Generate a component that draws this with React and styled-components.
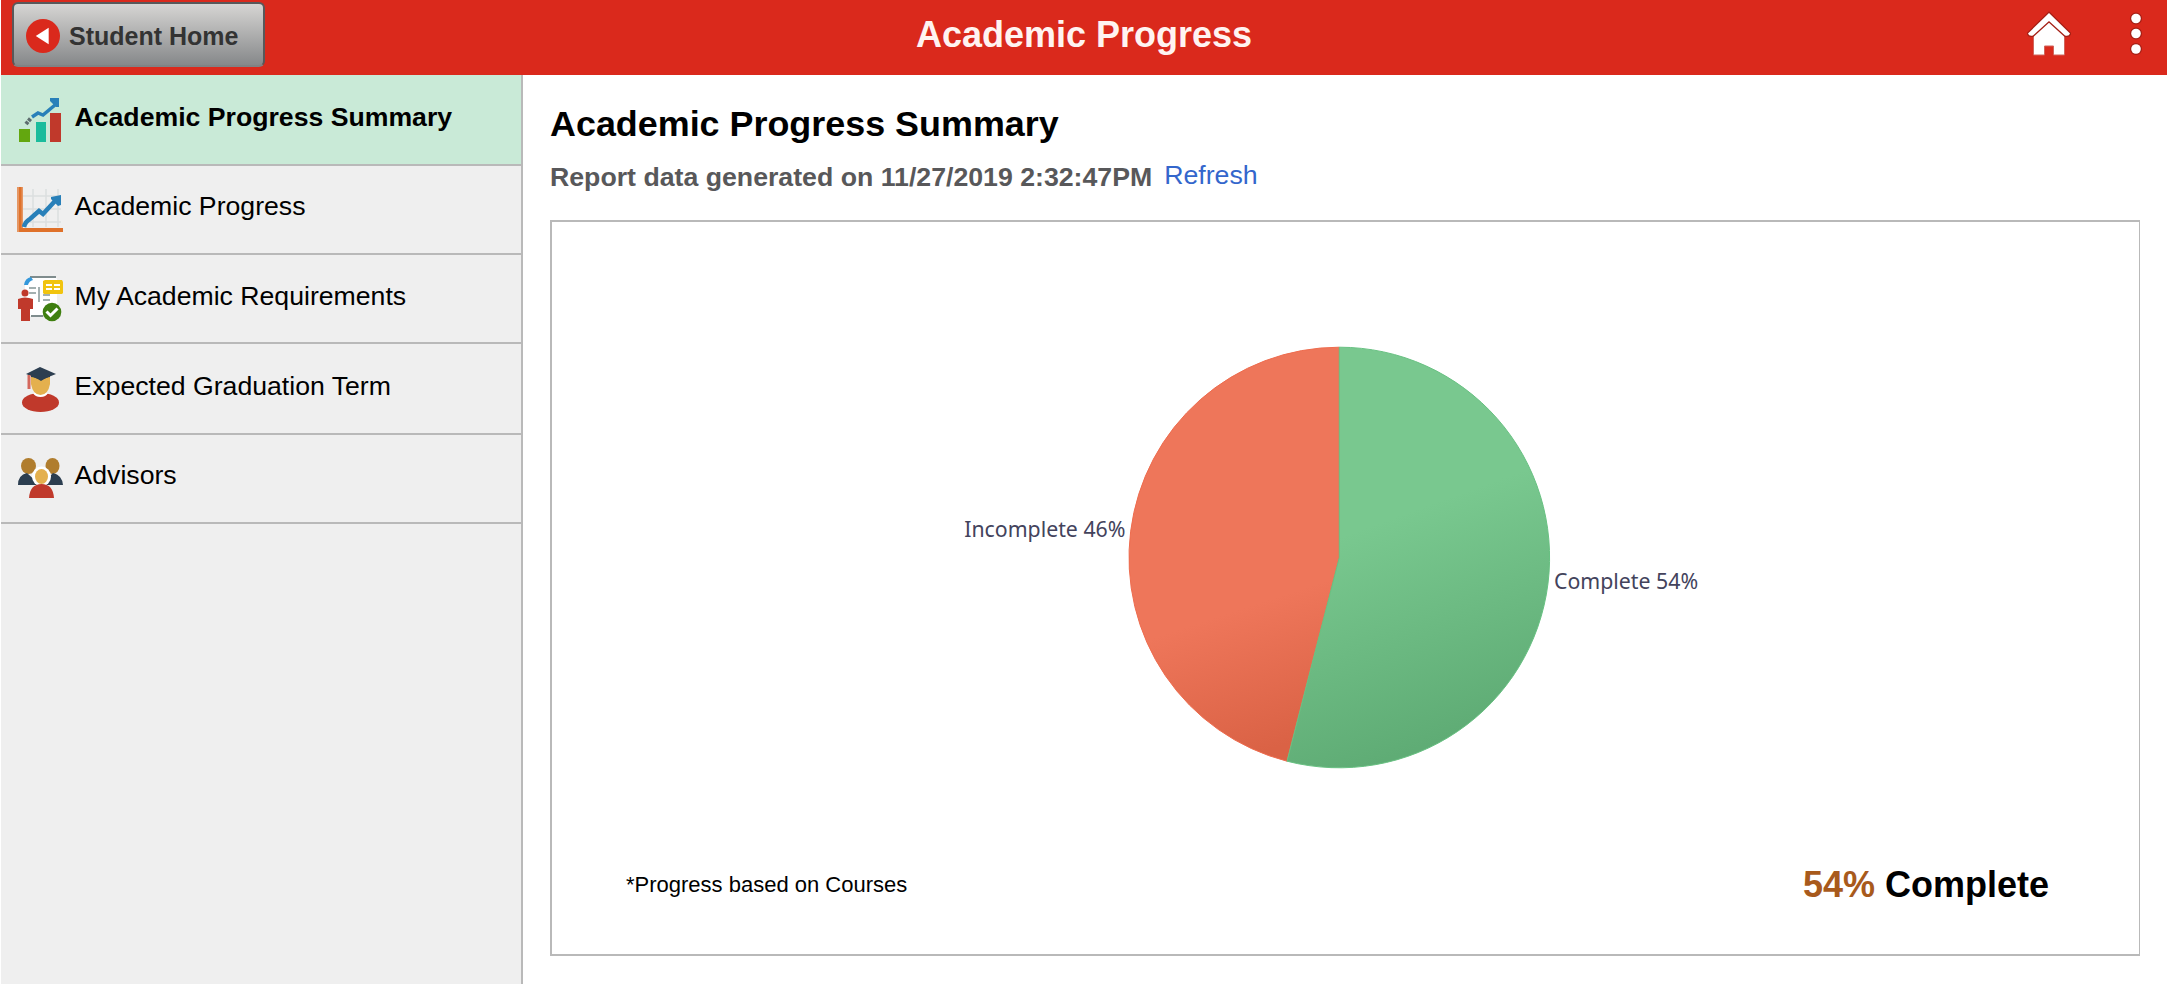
import React from 'react';
import styled, { createGlobalStyle } from 'styled-components';

const GlobalStyle = createGlobalStyle`
  * {
    box-sizing: border-box;
  }
  body {
    margin: 0;
    background: #fff;
    font-family: 'Liberation Sans', Arial, sans-serif;
  }
`;

const Page = styled.div`
  display: flex;
  flex-direction: column;
  width: 2168px;
  height: 984px;
  padding: 0 1px;
  overflow: hidden;
`;

const Header = styled.header`
  display: grid;
  grid-template-columns: 1fr auto 1fr;
  align-items: start;
  height: 75px;
  flex: none;
  background: #da291c;
`;

const BackButton = styled.button`
  display: flex;
  align-items: center;
  gap: 9px;
  width: 253px;
  height: 65px;
  margin: 2px 0 0 11px;
  padding: 3px 0 0 12px;
  border: 2px solid #58585a;
  border-bottom-color: #808284;
  border-radius: 6px;
  background: linear-gradient(#d6d5d3, #86888a);
  color: #333;
  font: bold 25px/30px 'Liberation Sans', Arial, sans-serif;
  white-space: nowrap;
`;

const HeaderTitle = styled.h1`
  margin: 13px 0 0;
  color: #fff3f1;
  font-size: 36px;
  line-height: 44px;
`;

const HeaderActions = styled.div`
  display: flex;
  justify-content: flex-end;
  gap: 58px;
  padding: 11px 24px 0 0;
`;

const Body = styled.div`
  display: flex;
  flex: 1;
  min-height: 0;
`;

const Sidebar = styled.nav`
  width: 522px;
  flex: none;
  border-right: 2px solid #b9b9b9;
  background: #efefef;
`;

const NavItem = styled.a`
  display: flex;
  gap: 11.5px;
  height: ${props => props.$height || 89}px;
  padding: ${props => props.$top || 22}px 0 0 16px;
  border-bottom: 2px solid #b9b9b9;
  background: ${props => (props.$active ? '#c9ead7' : 'transparent')};
  color: #000;
  font-size: 26.65px;
  font-weight: ${props => (props.$active ? 'bold' : 'normal')};
  line-height: 44px;
  white-space: nowrap;

  svg {
    flex: none;
  }
`;

const NavLabel = styled.span`
  margin-top: ${props => props.$shift || -4}px;
`;

const Content = styled.main`
  flex: 1;
  padding: 27px 27px 0;
`;

const PageTitle = styled.h2`
  margin: 0;
  font-size: 35.9px;
  line-height: 44px;
`;

const ReportLine = styled.div`
  display: flex;
  gap: 12px;
  height: 74px;
  padding-top: 11px;
  color: #58585a;
  font-size: 26.7px;
  font-weight: bold;
  line-height: 40px;
`;

const RefreshLink = styled.a`
  margin-top: -2px;
  color: #3366cc;
  font-weight: normal;
`;

const Panel = styled.section`
  display: flex;
  flex-direction: column;
  width: 1590px;
  height: 736px;
  border: 2px solid #b9b9b9;
  border-right-width: 1px;
`;

const PieChart = styled.svg`
  display: block;
  width: 1587px;
  height: 620px;

  text {
    fill: #43435c;
    font: 21.3px 'Noto Sans', sans-serif;
  }
`;

const PanelFooter = styled.div`
  display: flex;
  justify-content: space-between;
  align-items: flex-start;
  padding: 21px 90px 0 74px;
`;

const Note = styled.span`
  margin-top: 6px;
  font-size: 22px;
  line-height: 32px;
`;

const Total = styled.strong`
  font-size: 36px;
  line-height: 44px;
`;

const Percent = styled.span`
  color: #a85a1c;
`;

const BackIcon = () => (
  <svg width="34" height="34" viewBox="0 0 33 33">
    <circle cx="16.5" cy="16.5" r="16.5" fill="#da291c" />
    <path d="M9.500 16.500 22 8.500v16z" fill="#fff" />
  </svg>
);

const HomeIcon = () => (
  <svg width="44" height="46" viewBox="0 0 44 46">
    <path
      d="M6.500 22 22 8l15.500 14v22H26.500v-9h-9v9H6.500z"
      fill="#fff"
      stroke="#d0655c"
      strokeWidth="1"
    />
    <path
      d="M22 2 43 22.500q-1 3-5 2L22 10 6 24.500q-4 1-5-2z"
      fill="#fff"
      stroke="#a51f15"
      strokeWidth="2.500"
      paintOrder="stroke"
    />
  </svg>
);

const MenuIcon = () => (
  <svg width="14" height="46" viewBox="0 0 14 46">
    <g fill="#fff" stroke="#a51f15" strokeWidth="2.500" paintOrder="stroke">
      <circle cx="7" cy="7.500" r="4.800" />
      <circle cx="7" cy="22.500" r="4.800" />
      <circle cx="7" cy="38" r="4.800" />
    </g>
  </svg>
);

const SummaryIcon = () => (
  <svg width="46" height="46" viewBox="0 0 46 46">
    <path d="M2 32h11v13H2z" fill="#63a70f" />
    <path d="M19 25h10v20H19z" fill="#1abc9c" />
    <path d="M33 16h11v29H33z" fill="#c0392b" />
    <path d="m15 20 6-4 5 2 12-10" fill="none" stroke="#2980b9" strokeWidth="3.500" />
    <path d="M33 1h9v9h-3l-6-6z" fill="#2980b9" />
    <path d="m9 27 5-6" stroke="#5d6d6e" strokeWidth="4" strokeDasharray="3 1" />
  </svg>
);

const ProgressIcon = () => (
  <svg width="46" height="46" viewBox="0 0 46 46">
    <path
      d="M16 2v38M29 2v38M41 2v38M6 9h38M6 22h38M6 35h38"
      stroke="#dcdfe0"
      strokeWidth="1.500"
    />
    <path d="M0 0h6v45H0z" fill="#e59663" />
    <path d="M2 0h2.500v41H46v4H2z" fill="#df712a" />
    <path d="M7 40q1-5 6-8l9-8 4 3 12-13" fill="none" stroke="#2980b9" strokeWidth="4.500" />
    <path d="M34 10l10-2v10l-3 1-7-7z" fill="#2980b9" />
  </svg>
);

const RequirementsIcon = () => (
  <svg width="46" height="46" viewBox="0 0 46 46">
    <path d="M14 1h24l2 2v37H8V8z" fill="#fff" />
    <path d="M13 1h26M14 40h12" stroke="#7f8c8d" strokeWidth="2" />
    <path d="M7 9q1-7 7-8l2 3q-4 1-5 5z" fill="#3498db" />
    <path d="M22 11v15M12 12h7M12 17h7M26 19h7M26 24h7" stroke="#a3b0b0" strokeWidth="2" />
    <path d="M28 4h17l1 2v11l-1 1H27l-1-1V5z" fill="#f1c40f" />
    <path d="M29 9h6M37 9h6M29 13h6M37 13h6" stroke="#fff" strokeWidth="2" />
    <circle cx="8" cy="17" r="3.500" fill="#c0392b" />
    <path d="M1 23q7-3 15 0v10h-3v12H4V33H1z" fill="#c0392b" />
    <circle cx="35" cy="36" r="9.300" fill="#3f7f10" />
    <path d="m29.500 35.500 4 4 7-7" fill="none" stroke="#fff" strokeWidth="3" />
  </svg>
);

const GraduateIcon = () => (
  <svg width="46" height="46" viewBox="0 0 46 46">
    <ellipse cx="23.500" cy="35.500" rx="18.500" ry="9.500" fill="#c0392b" />
    <path d="M16 26h15q-2 4-7.500 4T16 26z" fill="#fff" />
    <path d="M14 9h19v8q-2 11-9.500 11T14 17z" fill="#e4b04e" />
    <path d="M14 8h19v2q-3 0-9 4-6-4-10-4z" fill="#2c3e50" />
    <path d="M9 7 23 0l16 7-15 6z" fill="#2c3e50" />
    <path d="M12 8v14" stroke="#d4685d" strokeWidth="3" />
  </svg>
);

const AdvisorsIcon = () => (
  <svg width="46" height="46" viewBox="0 0 46 46">
    <ellipse cx="11.500" cy="9" rx="7.500" ry="8" fill="#b07d2e" />
    <ellipse cx="35.500" cy="9" rx="7" ry="8" fill="#b07d2e" />
    <path d="M1 28q0-10 9-12l13 12zM24 28l12-12q9 2 10 12z" fill="#2c3e50" />
    <ellipse cx="24.500" cy="19.500" rx="9.500" ry="10" fill="#fff" />
    <ellipse cx="24.500" cy="19.500" rx="6.500" ry="7.500" fill="#e4b04e" />
    <path d="M12 41q1-14 12.500-14T37 41z" fill="#c0392b" />
  </svg>
);

const navItems = [
  { label: 'Academic Progress Summary', icon: <SummaryIcon />, active: true, height: 91, shift: -2 },
  { label: 'Academic Progress', icon: <ProgressIcon />, top: 21, shift: -3 },
  { label: 'My Academic Requirements', icon: <RequirementsIcon />, top: 21, shift: -2 },
  { label: 'Expected Graduation Term', icon: <GraduateIcon />, height: 91, top: 23, shift: -3 },
  { label: 'Advisors', icon: <AdvisorsIcon /> }
];

const complete = 54;
const center = { x: 787.3, y: 335.5 };
const radius = 210.3;

const pointAt = percent => {
  const angle = (percent / 100) * 2 * Math.PI;
  return `${center.x + radius * Math.sin(angle)} ${center.y - radius * Math.cos(angle)}`;
};

const slicePath = (from, to) =>
  `M${center.x} ${center.y}L${pointAt(from)}A${radius} ${radius} 0 ${
    to - from > 50 ? 1 : 0
  } 1 ${pointAt(to)}z`;

export default function App() {
  return (
    <Page>
      <GlobalStyle />
      <Header>
        <BackButton>
          <BackIcon />
          Student Home
        </BackButton>
        <HeaderTitle>Academic Progress</HeaderTitle>
        <HeaderActions>
          <HomeIcon />
          <MenuIcon />
        </HeaderActions>
      </Header>
      <Body>
        <Sidebar>
          {navItems.map(item => (
            <NavItem
              key={item.label}
              $active={item.active}
              $height={item.height}
              $top={item.top}
            >
              {item.icon}
              <NavLabel $shift={item.shift}>{item.label}</NavLabel>
            </NavItem>
          ))}
        </Sidebar>
        <Content>
          <PageTitle>Academic Progress Summary</PageTitle>
          <ReportLine>
            <span>Report data generated on 11/27/2019 2:32:47PM</span>
            <RefreshLink>Refresh</RefreshLink>
          </ReportLine>
          <Panel>
            <PieChart viewBox="0 0 1587 620">
              <defs>
                <linearGradient
                  id="green"
                  gradientUnits="userSpaceOnUse"
                  x1="830"
                  y1="300"
                  x2="907"
                  y2="511"
                >
                  <stop offset="0" stopColor="#79c88f" />
                  <stop offset="1" stopColor="#5fac75" />
                </linearGradient>
                <linearGradient
                  id="orange"
                  gradientUnits="userSpaceOnUse"
                  x1="680"
                  y1="390"
                  x2="725"
                  y2="525"
                >
                  <stop offset="0" stopColor="#ee765a" />
                  <stop offset="1" stopColor="#da6245" />
                </linearGradient>
              </defs>
              <path d={slicePath(complete, 100)} fill="url(#orange)" stroke="#ee6c4e" />
              <path d={slicePath(0, complete)} fill="url(#green)" stroke="#68c182" />
              <text x="573.500" y="315" textAnchor="end">
                Incomplete {100 - complete}%
              </text>
              <text x="1002" y="367">
                Complete {complete}%
              </text>
            </PieChart>
            <PanelFooter>
              <Note>*Progress based on Courses</Note>
              <Total>
                <Percent>{complete}%</Percent> Complete
              </Total>
            </PanelFooter>
          </Panel>
        </Content>
      </Body>
    </Page>
  );
}
